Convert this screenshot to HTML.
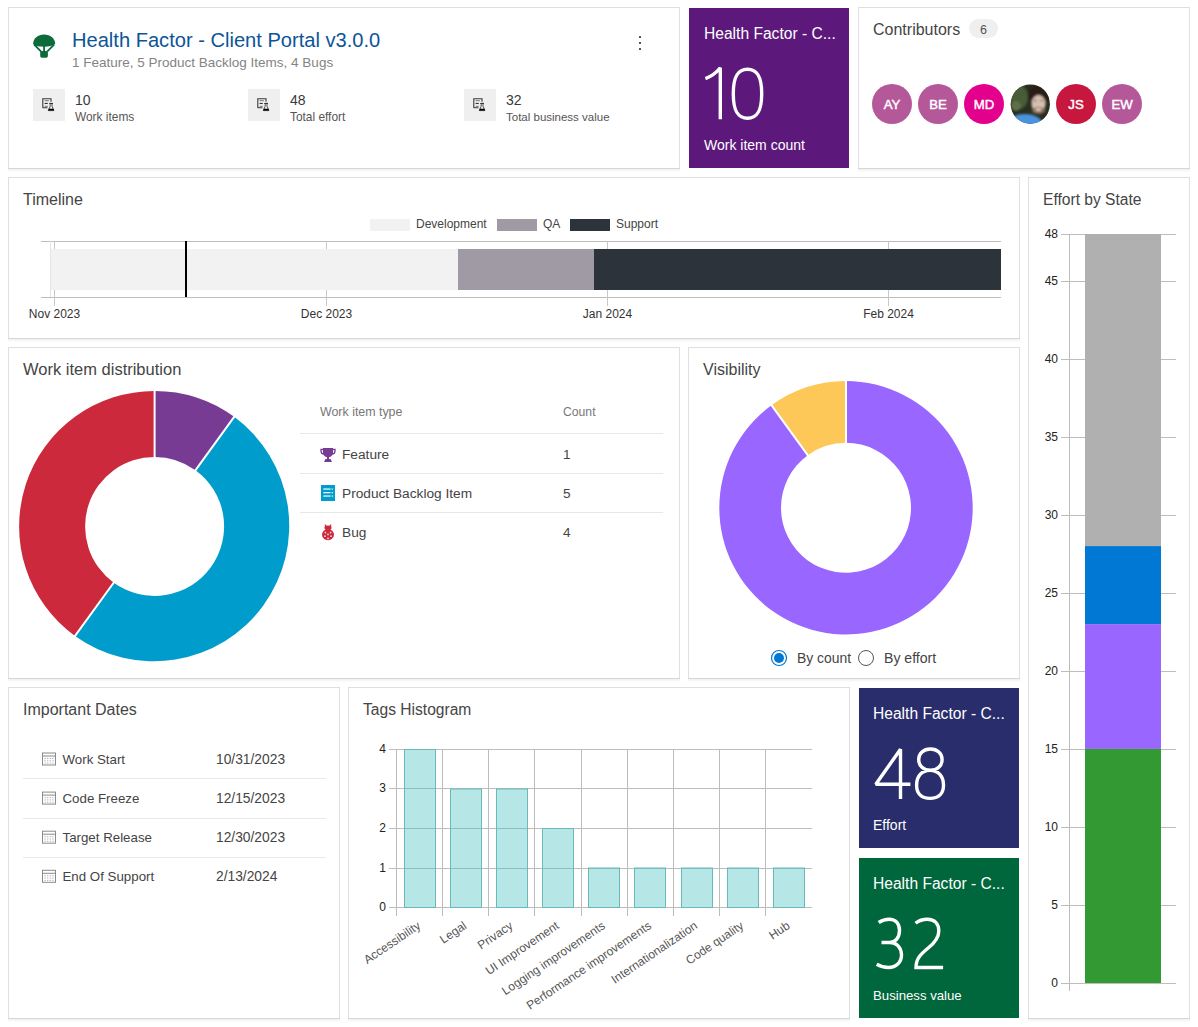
<!DOCTYPE html>
<html><head><meta charset="utf-8"><title>Dashboard</title>
<style>
html,body{margin:0;padding:0;background:#fff;}
body{width:1198px;height:1027px;overflow:hidden;position:relative;font-family:"Liberation Sans",sans-serif;}
svg{position:absolute;left:0;top:0;display:block;}
text{font-family:"Liberation Sans",sans-serif;}
</style></head>
<body>
<svg width="1198" height="1027" viewBox="0 0 1198 1027">
<rect x="8" y="169" width="672" height="1" fill="#f2f2f2" />
<rect x="8" y="170" width="672" height="1" fill="#f7f7f7" />
<rect x="8" y="171" width="672" height="1" fill="#fbfbfb" />
<rect x="8" y="7" width="672" height="162" fill="#dfdfdf" />
<rect x="8" y="168" width="672" height="1" fill="#d6d6d6" />
<rect x="9" y="8" width="670" height="160" fill="#fff" />
<rect x="858" y="169" width="332" height="1" fill="#f2f2f2" />
<rect x="858" y="170" width="332" height="1" fill="#f7f7f7" />
<rect x="858" y="171" width="332" height="1" fill="#fbfbfb" />
<rect x="858" y="7" width="332" height="162" fill="#dfdfdf" />
<rect x="858" y="168" width="332" height="1" fill="#d6d6d6" />
<rect x="859" y="8" width="330" height="160" fill="#fff" />
<rect x="8" y="339" width="1012" height="1" fill="#f2f2f2" />
<rect x="8" y="340" width="1012" height="1" fill="#f7f7f7" />
<rect x="8" y="341" width="1012" height="1" fill="#fbfbfb" />
<rect x="8" y="177" width="1012" height="162" fill="#dfdfdf" />
<rect x="8" y="338" width="1012" height="1" fill="#d6d6d6" />
<rect x="9" y="178" width="1010" height="160" fill="#fff" />
<rect x="1028" y="1019" width="162" height="1" fill="#f2f2f2" />
<rect x="1028" y="1020" width="162" height="1" fill="#f7f7f7" />
<rect x="1028" y="1021" width="162" height="1" fill="#fbfbfb" />
<rect x="1028" y="177" width="162" height="842" fill="#dfdfdf" />
<rect x="1028" y="1018" width="162" height="1" fill="#d6d6d6" />
<rect x="1029" y="178" width="160" height="840" fill="#fff" />
<rect x="8" y="679" width="672" height="1" fill="#f2f2f2" />
<rect x="8" y="680" width="672" height="1" fill="#f7f7f7" />
<rect x="8" y="681" width="672" height="1" fill="#fbfbfb" />
<rect x="8" y="347" width="672" height="332" fill="#dfdfdf" />
<rect x="8" y="678" width="672" height="1" fill="#d6d6d6" />
<rect x="9" y="348" width="670" height="330" fill="#fff" />
<rect x="688" y="679" width="332" height="1" fill="#f2f2f2" />
<rect x="688" y="680" width="332" height="1" fill="#f7f7f7" />
<rect x="688" y="681" width="332" height="1" fill="#fbfbfb" />
<rect x="688" y="347" width="332" height="332" fill="#dfdfdf" />
<rect x="688" y="678" width="332" height="1" fill="#d6d6d6" />
<rect x="689" y="348" width="330" height="330" fill="#fff" />
<rect x="8" y="1019" width="332" height="1" fill="#f2f2f2" />
<rect x="8" y="1020" width="332" height="1" fill="#f7f7f7" />
<rect x="8" y="1021" width="332" height="1" fill="#fbfbfb" />
<rect x="8" y="687" width="332" height="332" fill="#dfdfdf" />
<rect x="8" y="1018" width="332" height="1" fill="#d6d6d6" />
<rect x="9" y="688" width="330" height="330" fill="#fff" />
<rect x="348" y="1019" width="502" height="1" fill="#f2f2f2" />
<rect x="348" y="1020" width="502" height="1" fill="#f7f7f7" />
<rect x="348" y="1021" width="502" height="1" fill="#fbfbfb" />
<rect x="348" y="687" width="502" height="332" fill="#dfdfdf" />
<rect x="348" y="1018" width="502" height="1" fill="#d6d6d6" />
<rect x="349" y="688" width="500" height="330" fill="#fff" />
<path d="M33.1,44.2 C33,38.2 38,34.4 44.1,34.4 C50.2,34.4 55.2,38.2 55.2,44 C53,46 49,46.7 44.1,46.7 C39.2,46.7 35.2,46 33.1,44.2 Z" fill="#0d6b3b"/>
<path d="M34.2,44.6 L41.2,51.6 M54.1,44.6 L47.1,51.6 M44.1,46 V51.6" stroke="#0d6b3b" stroke-width="1.8" fill="none"/>
<rect x="40.2" y="51" width="7.7" height="6.7" rx="1.6" fill="#0d6b3b"/>
<text x="72" y="47" font-size="20.1" fill="#0c5597" text-anchor="start" font-weight="normal" >Health Factor - Client Portal v3.0.0</text>
<text x="72" y="66.5" font-size="13.5" fill="#848484" text-anchor="start" font-weight="normal" >1 Feature, 5 Product Backlog Items, 4 Bugs</text>
<rect x="639" y="36" width="2" height="2" fill="#555" />
<rect x="639" y="42" width="2" height="2" fill="#555" />
<rect x="639" y="48" width="2" height="2" fill="#555" />
<rect x="33" y="89" width="32" height="32" fill="#efefef" />
<g transform="translate(0 0)"><path d="M42.8,108 V98.8 H51 V101.8 M42.8,107.8 H47.5" stroke="#3a3a3a" stroke-width="1.1" fill="none"/><rect x="44.6" y="100.2" width="4.2" height="1" fill="#777"/><rect x="44.6" y="102.9" width="3.2" height="1.1" fill="#333"/><rect x="44.6" y="105.8" width="3.2" height="1" fill="#777"/><rect x="49.2" y="102.9" width="3.8" height="1.1" fill="#333"/><path d="M50.2,104 V106.2 L48.3,110.6 H53.9 L52,106.2 V104" stroke="#444" stroke-width="0.9" fill="none"/><path d="M48.6,108.8 H53.6 L54,110.6 H48.2 Z" fill="#000"/></g>
<text x="75" y="104.5" font-size="14" fill="#3a3a3a" text-anchor="start" font-weight="normal" >10</text>
<text x="75" y="121" font-size="11.9" fill="#555" text-anchor="start" font-weight="normal" >Work items</text>
<rect x="248" y="89" width="32" height="32" fill="#efefef" />
<g transform="translate(215 0)"><path d="M42.8,108 V98.8 H51 V101.8 M42.8,107.8 H47.5" stroke="#3a3a3a" stroke-width="1.1" fill="none"/><rect x="44.6" y="100.2" width="4.2" height="1" fill="#777"/><rect x="44.6" y="102.9" width="3.2" height="1.1" fill="#333"/><rect x="44.6" y="105.8" width="3.2" height="1" fill="#777"/><rect x="49.2" y="102.9" width="3.8" height="1.1" fill="#333"/><path d="M50.2,104 V106.2 L48.3,110.6 H53.9 L52,106.2 V104" stroke="#444" stroke-width="0.9" fill="none"/><path d="M48.6,108.8 H53.6 L54,110.6 H48.2 Z" fill="#000"/></g>
<text x="290" y="104.5" font-size="14" fill="#3a3a3a" text-anchor="start" font-weight="normal" >48</text>
<text x="290" y="121" font-size="11.9" fill="#555" text-anchor="start" font-weight="normal" >Total effort</text>
<rect x="464" y="89" width="32" height="32" fill="#efefef" />
<g transform="translate(431 0)"><path d="M42.8,108 V98.8 H51 V101.8 M42.8,107.8 H47.5" stroke="#3a3a3a" stroke-width="1.1" fill="none"/><rect x="44.6" y="100.2" width="4.2" height="1" fill="#777"/><rect x="44.6" y="102.9" width="3.2" height="1.1" fill="#333"/><rect x="44.6" y="105.8" width="3.2" height="1" fill="#777"/><rect x="49.2" y="102.9" width="3.8" height="1.1" fill="#333"/><path d="M50.2,104 V106.2 L48.3,110.6 H53.9 L52,106.2 V104" stroke="#444" stroke-width="0.9" fill="none"/><path d="M48.6,108.8 H53.6 L54,110.6 H48.2 Z" fill="#000"/></g>
<text x="506" y="104.5" font-size="14" fill="#3a3a3a" text-anchor="start" font-weight="normal" >32</text>
<text x="506" y="121" font-size="11.5" fill="#555" text-anchor="start" font-weight="normal" >Total business value</text>
<rect x="689" y="8" width="160" height="160" fill="#5c197b" />
<text x="704" y="38.8" font-size="15.6" fill="#fff" text-anchor="start" font-weight="normal" >Health Factor - C...</text>
<path d="M705.4,78.6 C711.5,76.5 716.5,72.5 720.3,67.8 L720.3,119.3 M747.5,69.3 C738,69.3 733.3,76 733.3,93.7 C733.3,111.5 738,118.2 747.5,118.2 C757,118.2 761.7,111.5 761.7,93.7 C761.7,76 757,69.3 747.5,69.3 Z" fill="none" stroke="#fff" stroke-width="3.4" stroke-linejoin="miter" stroke-miterlimit="2"/>
<text x="704" y="149.5" font-size="14.0" fill="#fff" text-anchor="start" font-weight="normal" >Work item count</text>
<rect x="859" y="688" width="160" height="160" fill="#292d6c" />
<text x="873" y="718.8" font-size="15.6" fill="#fff" text-anchor="start" font-weight="normal" >Health Factor - C...</text>
<path d="M910.4,784.2 L875.8,784.2 L900.5,749.3 L900.5,799 M930.4,749 C923.5,749 918.7,753.3 918.7,759.6 C918.7,765.9 923.5,770.3 930.4,770.3 C937.3,770.3 942.1,765.9 942.1,759.6 C942.1,753.3 937.3,749 930.4,749 Z M930,770.3 C921.7,770.3 916.6,776.3 916.6,785.3 C916.6,793.8 921.7,798.4 930,798.4 C938.3,798.4 943.5,793.8 943.5,785.3 C943.5,776.3 938.3,770.3 930,770.3 Z" fill="none" stroke="#fff" stroke-width="3.4" stroke-linejoin="miter" stroke-miterlimit="2"/>
<text x="873" y="829.5" font-size="14.0" fill="#fff" text-anchor="start" font-weight="normal" >Effort</text>
<rect x="859" y="858" width="160" height="160" fill="#00663b" />
<text x="873" y="888.8" font-size="15.6" fill="#fff" text-anchor="start" font-weight="normal" >Health Factor - C...</text>
<path d="M878.7,922.5 C882,920.2 885.5,919.2 889.2,919.2 C895.5,919.2 899.5,923.5 899.5,930.5 C899.5,937.5 895.5,942.5 889.5,942.5 L881.5,942.5 M889.5,942.5 C897,942.5 901.5,948 901.5,955 C901.5,962.5 896,967.5 888.5,967.5 C884,967.5 880,966.3 876.7,964.3 M915.6,923.2 C918.8,920.5 922.5,919.2 927.5,919.2 C934.5,919.2 938.8,923.8 938.8,931 C938.8,937.5 935.5,942 928.5,947.8 C921,954 916,958.5 916,967.5 L943.1,967.5" fill="none" stroke="#fff" stroke-width="3.4" stroke-linejoin="miter" stroke-miterlimit="2"/>
<text x="873" y="999.5" font-size="13.2" fill="#fff" text-anchor="start" font-weight="normal" >Business value</text>
<text x="873" y="35" font-size="16" fill="#454545" text-anchor="start" font-weight="normal" >Contributors</text>
<rect x="969" y="19" width="29" height="19" rx="9.5" fill="#efefef"/>
<text x="983.5" y="33.5" font-size="12.5" fill="#555" text-anchor="middle" font-weight="normal" >6</text>
<defs><radialGradient id="face" cx="0.55" cy="0.42" r="0.3"><stop offset="0" stop-color="#d9a98a"/><stop offset="0.7" stop-color="#b07a5a"/><stop offset="1" stop-color="#4a3a2a" stop-opacity="0"/></radialGradient><filter id="avblur" x="-20%" y="-20%" width="140%" height="140%"><feGaussianBlur stdDeviation="1.0"/></filter><clipPath id="avclip"><circle cx="1030.3" cy="104.2" r="19.6"/></clipPath></defs>
<circle cx="892" cy="104" r="20" fill="#b4589a"/>
<text x="892" y="109" font-size="13.2" fill="#fff" text-anchor="middle" font-weight="normal" stroke="#fff" stroke-width="0.45">AY</text>
<circle cx="938" cy="104" r="20" fill="#b4589a"/>
<text x="938" y="109" font-size="13.2" fill="#fff" text-anchor="middle" font-weight="normal" stroke="#fff" stroke-width="0.45">BE</text>
<circle cx="984" cy="104" r="20" fill="#e3008c"/>
<text x="984" y="109" font-size="13.2" fill="#fff" text-anchor="middle" font-weight="normal" stroke="#fff" stroke-width="0.45">MD</text>
<g clip-path="url(#avclip)"><rect x="1010" y="84" width="40" height="40" fill="#27301f"/><g filter="url(#avblur)"><ellipse cx="1019" cy="97" rx="9" ry="12" fill="#4a5c38"/><ellipse cx="1016" cy="106" rx="5" ry="5" fill="#5f7048"/><ellipse cx="1039" cy="95" rx="11" ry="10" fill="#2a1e16"/><ellipse cx="1038.5" cy="104" rx="7" ry="9" fill="#d6bfb0"/><ellipse cx="1038.5" cy="110.5" rx="6.5" ry="3.5" fill="#8a6c5a"/><ellipse cx="1038.5" cy="109.5" rx="3" ry="1.6" fill="#e0cabb"/><rect x="1034" y="100" width="2.4" height="1.2" fill="#5a4030"/><rect x="1040.5" y="100" width="2.4" height="1.2" fill="#5a4030"/><ellipse cx="1045" cy="118" rx="6" ry="6" fill="#2a2a22"/><ellipse cx="1025" cy="122.5" rx="16" ry="8.5" fill="#4a94e0"/></g></g>
<circle cx="1076" cy="104" r="20" fill="#c8173f"/>
<text x="1076" y="109" font-size="13.2" fill="#fff" text-anchor="middle" font-weight="normal" stroke="#fff" stroke-width="0.45">JS</text>
<circle cx="1122" cy="104" r="20" fill="#b4589a"/>
<text x="1122" y="109" font-size="13.2" fill="#fff" text-anchor="middle" font-weight="normal" stroke="#fff" stroke-width="0.45">EW</text>
<text x="23" y="205" font-size="16" fill="#454545" text-anchor="start" font-weight="normal" >Timeline</text>
<rect x="370" y="219" width="40" height="12" fill="#f2f2f2" />
<text x="416" y="228" font-size="12" fill="#444" text-anchor="start" font-weight="normal" >Development</text>
<rect x="497" y="219" width="40" height="12" fill="#a09aa4" />
<text x="543" y="228" font-size="12" fill="#444" text-anchor="start" font-weight="normal" >QA</text>
<rect x="570" y="219" width="40" height="12" fill="#2d333b" />
<text x="616" y="228" font-size="12" fill="#444" text-anchor="start" font-weight="normal" >Support</text>
<rect x="50" y="249" width="408" height="41" fill="#f2f2f2" />
<rect x="458" y="249" width="136" height="41" fill="#a09aa4" />
<rect x="594" y="249" width="407" height="41" fill="#2d333b" />
<rect x="41" y="241" width="960" height="1" fill="#bdbdbd"/>
<rect x="41" y="297" width="960" height="1" fill="#bdbdbd"/>
<rect x="50" y="241" width="1" height="56" fill="#e4e4e4"/>
<rect x="54" y="241" width="1" height="8" fill="#c8c8c8"/>
<rect x="54" y="290" width="1" height="16" fill="#c8c8c8"/>
<text x="54.5" y="318" font-size="12" fill="#333" text-anchor="middle" font-weight="normal" >Nov 2023</text>
<rect x="326" y="241" width="1" height="8" fill="#c8c8c8"/>
<rect x="326" y="290" width="1" height="16" fill="#c8c8c8"/>
<text x="326.5" y="318" font-size="12" fill="#333" text-anchor="middle" font-weight="normal" >Dec 2023</text>
<rect x="607" y="241" width="1" height="8" fill="#c8c8c8"/>
<rect x="607" y="290" width="1" height="16" fill="#c8c8c8"/>
<text x="607.5" y="318" font-size="12" fill="#333" text-anchor="middle" font-weight="normal" >Jan 2024</text>
<rect x="888" y="241" width="1" height="8" fill="#c8c8c8"/>
<rect x="888" y="290" width="1" height="16" fill="#c8c8c8"/>
<text x="888.5" y="318" font-size="12" fill="#333" text-anchor="middle" font-weight="normal" >Feb 2024</text>
<rect x="185" y="241" width="2" height="56" fill="#000" />
<text x="1043" y="205" font-size="15.6" fill="#454545" text-anchor="start" font-weight="normal" >Effort by State</text>
<rect x="1061" y="983" width="115" height="1" fill="#bdbdbd"/>
<text x="1058" y="987" font-size="12" fill="#222" text-anchor="end" font-weight="normal" >0</text>
<rect x="1061" y="905" width="115" height="1" fill="#bdbdbd"/>
<text x="1058" y="909" font-size="12" fill="#222" text-anchor="end" font-weight="normal" >5</text>
<rect x="1061" y="827" width="115" height="1" fill="#bdbdbd"/>
<text x="1058" y="831" font-size="12" fill="#222" text-anchor="end" font-weight="normal" >10</text>
<rect x="1061" y="749" width="115" height="1" fill="#bdbdbd"/>
<text x="1058" y="753" font-size="12" fill="#222" text-anchor="end" font-weight="normal" >15</text>
<rect x="1061" y="671" width="115" height="1" fill="#bdbdbd"/>
<text x="1058" y="675" font-size="12" fill="#222" text-anchor="end" font-weight="normal" >20</text>
<rect x="1061" y="593" width="115" height="1" fill="#bdbdbd"/>
<text x="1058" y="597" font-size="12" fill="#222" text-anchor="end" font-weight="normal" >25</text>
<rect x="1061" y="515" width="115" height="1" fill="#bdbdbd"/>
<text x="1058" y="519" font-size="12" fill="#222" text-anchor="end" font-weight="normal" >30</text>
<rect x="1061" y="437" width="115" height="1" fill="#bdbdbd"/>
<text x="1058" y="441" font-size="12" fill="#222" text-anchor="end" font-weight="normal" >35</text>
<rect x="1061" y="359" width="115" height="1" fill="#bdbdbd"/>
<text x="1058" y="363" font-size="12" fill="#222" text-anchor="end" font-weight="normal" >40</text>
<rect x="1061" y="281" width="115" height="1" fill="#bdbdbd"/>
<text x="1058" y="285" font-size="12" fill="#222" text-anchor="end" font-weight="normal" >45</text>
<rect x="1061" y="234" width="115" height="1" fill="#bdbdbd"/>
<text x="1058" y="238" font-size="12" fill="#222" text-anchor="end" font-weight="normal" >48</text>
<rect x="1069" y="234" width="1" height="757" fill="#bdbdbd"/>
<rect x="1085" y="234.0" width="76" height="312.08333333333337" fill="#b0b0b0" />
<rect x="1085" y="546.0833333333334" width="76" height="78.02083333333337" fill="#0078d4" />
<rect x="1085" y="624.1041666666667" width="76" height="124.83333333333326" fill="#9966ff" />
<rect x="1085" y="748.9375" width="76" height="234.0625" fill="#339933" />
<text x="23" y="375" font-size="16.5" fill="#454545" text-anchor="start" font-weight="normal" >Work item distribution</text>
<path d="M154.60,390.90 A135.5,135.5 0 0 1 234.24,416.78 L195.45,470.17 A69.5,69.5 0 0 0 154.60,456.90 Z" fill="#773b93"/>
<path d="M234.24,416.78 A135.5,135.5 0 0 1 74.96,636.02 L113.75,582.63 A69.5,69.5 0 0 0 195.45,470.17 Z" fill="#009ccc"/>
<path d="M74.96,636.02 A135.5,135.5 0 0 1 154.60,390.90 L154.60,456.90 A69.5,69.5 0 0 0 113.75,582.63 Z" fill="#cc293d"/>
<line x1="154.60" y1="458.90" x2="154.60" y2="388.90" stroke="#fff" stroke-width="2"/>
<line x1="194.28" y1="471.79" x2="235.42" y2="415.16" stroke="#fff" stroke-width="2"/>
<line x1="114.92" y1="581.01" x2="73.78" y2="637.64" stroke="#fff" stroke-width="2"/>
<text x="320" y="416" font-size="12.4" fill="#777" text-anchor="start" font-weight="normal" >Work item type</text>
<text x="563" y="416" font-size="12.2" fill="#777" text-anchor="start" font-weight="normal" >Count</text>
<rect x="300" y="433" width="363" height="1" fill="#e8e8e8"/>
<rect x="300" y="473" width="363" height="1" fill="#e8e8e8"/>
<rect x="300" y="512" width="363" height="1" fill="#e8e8e8"/>
<text x="342" y="459" font-size="13.7" fill="#444" text-anchor="start" font-weight="normal" >Feature</text>
<text x="563" y="459" font-size="13.6" fill="#444" text-anchor="start" font-weight="normal" >1</text>
<text x="342" y="498" font-size="13.7" fill="#444" text-anchor="start" font-weight="normal" >Product Backlog Item</text>
<text x="563" y="498" font-size="13.6" fill="#444" text-anchor="start" font-weight="normal" >5</text>
<text x="342" y="537" font-size="13.7" fill="#444" text-anchor="start" font-weight="normal" >Bug</text>
<text x="563" y="537" font-size="13.6" fill="#444" text-anchor="start" font-weight="normal" >4</text>
<path d="M323,448 h10 v4.5 a5,5 0 0 1 -10,0 z" fill="#773b93"/>
<path d="M323,449.5 h-2 v1.5 a3,3 0 0 0 3,3 M333,449.5 h2 v1.5 a3,3 0 0 1 -3,3" stroke="#773b93" stroke-width="1.3" fill="none"/>
<rect x="327" y="456" width="2" height="3" fill="#773b93"/><path d="M324,462 l1.5,-3 h5 l1.5,3 z" fill="#773b93"/>
<rect x="321" y="485" width="14" height="16" fill="#009ccc"/>
<rect x="323.3" y="488.4" width="7.2" height="1.3" fill="#e6f6fb"/>
<rect x="331.5" y="488.4" width="1.6" height="1.3" fill="#bfe8f5"/>
<rect x="323.3" y="492" width="7.2" height="1.3" fill="#e6f6fb"/>
<rect x="331.5" y="492" width="1.6" height="1.3" fill="#bfe8f5"/>
<rect x="323.3" y="495.4" width="7.2" height="1.3" fill="#e6f6fb"/>
<rect x="331.5" y="495.4" width="1.6" height="1.3" fill="#bfe8f5"/>
<path d="M324.8,524.6 l1.6,1.8 M331.2,524.6 l-1.6,1.8" stroke="#cc293d" stroke-width="1.1"/>
<ellipse cx="328" cy="527.8" rx="3.6" ry="2.4" fill="#cc293d"/>
<ellipse cx="328" cy="534.6" rx="6" ry="5.6" fill="#cc293d"/>
<circle cx="325.4" cy="532.6" r="0.9" fill="#f7d5da"/>
<circle cx="330.6" cy="532.6" r="0.9" fill="#f7d5da"/>
<circle cx="325" cy="536.2" r="0.9" fill="#f7d5da"/>
<circle cx="331" cy="536.2" r="0.9" fill="#f7d5da"/>
<circle cx="328" cy="538.4" r="0.9" fill="#f7d5da"/>
<circle cx="328" cy="534.4" r="0.9" fill="#f7d5da"/>
<text x="703" y="375" font-size="16" fill="#454545" text-anchor="start" font-weight="normal" >Visibility</text>
<path d="M846.00,381.10 A126.7,126.7 0 1 1 771.53,405.30 L807.79,455.21 A65,65 0 1 0 846.00,442.80 Z" fill="#9966ff"/>
<path d="M771.53,405.30 A126.7,126.7 0 0 1 846.00,381.10 L846.00,442.80 A65,65 0 0 0 807.79,455.21 Z" fill="#fdc857"/>
<line x1="846.00" y1="444.80" x2="846.00" y2="379.10" stroke="#fff" stroke-width="2"/>
<line x1="808.97" y1="456.83" x2="770.35" y2="403.68" stroke="#fff" stroke-width="2"/>
<circle cx="779" cy="658" r="7.5" fill="none" stroke="#0078d4" stroke-width="1.2"/><circle cx="779" cy="658" r="5" fill="#0078d4"/>
<text x="797" y="663" font-size="13.9" fill="#444" text-anchor="start" font-weight="normal" >By count</text>
<circle cx="866" cy="658" r="7.5" fill="none" stroke="#555" stroke-width="1"/>
<text x="884" y="663" font-size="14.1" fill="#444" text-anchor="start" font-weight="normal" >By effort</text>
<text x="23" y="715" font-size="16" fill="#454545" text-anchor="start" font-weight="normal" >Important Dates</text>
<rect x="42.5" y="753.0" width="13" height="12" fill="none" stroke="#8a8a8a" stroke-width="1"/>
<rect x="42.5" y="755.5" width="13" height="1" fill="#8a8a8a"/>
<rect x="44.5" y="758.0" width="1.2" height="1" fill="#aaa"/>
<rect x="44.5" y="760.3" width="1.2" height="1" fill="#aaa"/>
<rect x="44.5" y="762.6" width="1.2" height="1" fill="#aaa"/>
<rect x="47.1" y="758.0" width="1.2" height="1" fill="#aaa"/>
<rect x="47.1" y="760.3" width="1.2" height="1" fill="#aaa"/>
<rect x="47.1" y="762.6" width="1.2" height="1" fill="#aaa"/>
<rect x="49.7" y="758.0" width="1.2" height="1" fill="#aaa"/>
<rect x="49.7" y="760.3" width="1.2" height="1" fill="#aaa"/>
<rect x="49.7" y="762.6" width="1.2" height="1" fill="#aaa"/>
<rect x="52.3" y="758.0" width="1.2" height="1" fill="#aaa"/>
<rect x="52.3" y="760.3" width="1.2" height="1" fill="#aaa"/>
<rect x="52.3" y="762.6" width="1.2" height="1" fill="#aaa"/>
<text x="62.5" y="764.0" font-size="13.3" fill="#444" text-anchor="start" font-weight="normal" >Work Start</text>
<text x="216" y="764.0" font-size="13.8" fill="#444" text-anchor="start" font-weight="normal" >10/31/2023</text>
<rect x="23" y="778" width="303" height="1" fill="#e8e8e8"/>
<rect x="42.5" y="792.1" width="13" height="12" fill="none" stroke="#8a8a8a" stroke-width="1"/>
<rect x="42.5" y="794.6" width="13" height="1" fill="#8a8a8a"/>
<rect x="44.5" y="797.1" width="1.2" height="1" fill="#aaa"/>
<rect x="44.5" y="799.4" width="1.2" height="1" fill="#aaa"/>
<rect x="44.5" y="801.7" width="1.2" height="1" fill="#aaa"/>
<rect x="47.1" y="797.1" width="1.2" height="1" fill="#aaa"/>
<rect x="47.1" y="799.4" width="1.2" height="1" fill="#aaa"/>
<rect x="47.1" y="801.7" width="1.2" height="1" fill="#aaa"/>
<rect x="49.7" y="797.1" width="1.2" height="1" fill="#aaa"/>
<rect x="49.7" y="799.4" width="1.2" height="1" fill="#aaa"/>
<rect x="49.7" y="801.7" width="1.2" height="1" fill="#aaa"/>
<rect x="52.3" y="797.1" width="1.2" height="1" fill="#aaa"/>
<rect x="52.3" y="799.4" width="1.2" height="1" fill="#aaa"/>
<rect x="52.3" y="801.7" width="1.2" height="1" fill="#aaa"/>
<text x="62.5" y="803.1" font-size="13.3" fill="#444" text-anchor="start" font-weight="normal" >Code Freeze</text>
<text x="216" y="803.1" font-size="13.8" fill="#444" text-anchor="start" font-weight="normal" >12/15/2023</text>
<rect x="23" y="818" width="303" height="1" fill="#e8e8e8"/>
<rect x="42.5" y="831.2" width="13" height="12" fill="none" stroke="#8a8a8a" stroke-width="1"/>
<rect x="42.5" y="833.7" width="13" height="1" fill="#8a8a8a"/>
<rect x="44.5" y="836.2" width="1.2" height="1" fill="#aaa"/>
<rect x="44.5" y="838.5" width="1.2" height="1" fill="#aaa"/>
<rect x="44.5" y="840.8" width="1.2" height="1" fill="#aaa"/>
<rect x="47.1" y="836.2" width="1.2" height="1" fill="#aaa"/>
<rect x="47.1" y="838.5" width="1.2" height="1" fill="#aaa"/>
<rect x="47.1" y="840.8" width="1.2" height="1" fill="#aaa"/>
<rect x="49.7" y="836.2" width="1.2" height="1" fill="#aaa"/>
<rect x="49.7" y="838.5" width="1.2" height="1" fill="#aaa"/>
<rect x="49.7" y="840.8" width="1.2" height="1" fill="#aaa"/>
<rect x="52.3" y="836.2" width="1.2" height="1" fill="#aaa"/>
<rect x="52.3" y="838.5" width="1.2" height="1" fill="#aaa"/>
<rect x="52.3" y="840.8" width="1.2" height="1" fill="#aaa"/>
<text x="62.5" y="842.2" font-size="13.3" fill="#444" text-anchor="start" font-weight="normal" >Target Release</text>
<text x="216" y="842.2" font-size="13.8" fill="#444" text-anchor="start" font-weight="normal" >12/30/2023</text>
<rect x="23" y="857" width="303" height="1" fill="#e8e8e8"/>
<rect x="42.5" y="870.3" width="13" height="12" fill="none" stroke="#8a8a8a" stroke-width="1"/>
<rect x="42.5" y="872.8" width="13" height="1" fill="#8a8a8a"/>
<rect x="44.5" y="875.3" width="1.2" height="1" fill="#aaa"/>
<rect x="44.5" y="877.6" width="1.2" height="1" fill="#aaa"/>
<rect x="44.5" y="879.9" width="1.2" height="1" fill="#aaa"/>
<rect x="47.1" y="875.3" width="1.2" height="1" fill="#aaa"/>
<rect x="47.1" y="877.6" width="1.2" height="1" fill="#aaa"/>
<rect x="47.1" y="879.9" width="1.2" height="1" fill="#aaa"/>
<rect x="49.7" y="875.3" width="1.2" height="1" fill="#aaa"/>
<rect x="49.7" y="877.6" width="1.2" height="1" fill="#aaa"/>
<rect x="49.7" y="879.9" width="1.2" height="1" fill="#aaa"/>
<rect x="52.3" y="875.3" width="1.2" height="1" fill="#aaa"/>
<rect x="52.3" y="877.6" width="1.2" height="1" fill="#aaa"/>
<rect x="52.3" y="879.9" width="1.2" height="1" fill="#aaa"/>
<text x="62.5" y="881.3" font-size="13.3" fill="#444" text-anchor="start" font-weight="normal" >End Of Support</text>
<text x="216" y="881.3" font-size="13.8" fill="#444" text-anchor="start" font-weight="normal" >2/13/2024</text>
<text x="363" y="715" font-size="15.6" fill="#454545" text-anchor="start" font-weight="normal" >Tags Histogram</text>
<rect x="396" y="749" width="1" height="167" fill="#bdbdbd"/>
<rect x="442" y="749" width="1" height="167" fill="#bdbdbd"/>
<rect x="488" y="749" width="1" height="167" fill="#bdbdbd"/>
<rect x="534" y="749" width="1" height="167" fill="#bdbdbd"/>
<rect x="581" y="749" width="1" height="167" fill="#bdbdbd"/>
<rect x="627" y="749" width="1" height="167" fill="#bdbdbd"/>
<rect x="673" y="749" width="1" height="167" fill="#bdbdbd"/>
<rect x="719" y="749" width="1" height="167" fill="#bdbdbd"/>
<rect x="765" y="749" width="1" height="167" fill="#bdbdbd"/>
<rect x="389" y="907" width="423" height="1" fill="#bdbdbd"/>
<text x="386" y="911" font-size="12" fill="#222" text-anchor="end" font-weight="normal" >0</text>
<rect x="389" y="868" width="423" height="1" fill="#bdbdbd"/>
<text x="386" y="872" font-size="12" fill="#222" text-anchor="end" font-weight="normal" >1</text>
<rect x="389" y="828" width="423" height="1" fill="#bdbdbd"/>
<text x="386" y="832" font-size="12" fill="#222" text-anchor="end" font-weight="normal" >2</text>
<rect x="389" y="788" width="423" height="1" fill="#bdbdbd"/>
<text x="386" y="792" font-size="12" fill="#222" text-anchor="end" font-weight="normal" >3</text>
<rect x="389" y="749" width="423" height="1" fill="#bdbdbd"/>
<text x="386" y="753" font-size="12" fill="#222" text-anchor="end" font-weight="normal" >4</text>
<rect x="404.5" y="749.5" width="31" height="158.0" fill="rgba(75,192,192,0.4)" stroke="#68baba" stroke-width="1"/>
<text x="419.6" y="925" font-size="12" fill="#555" text-anchor="end" dominant-baseline="middle" transform="rotate(-34 419.6 925)">Accessibility</text>
<rect x="450.5" y="789.0" width="31" height="118.5" fill="rgba(75,192,192,0.4)" stroke="#68baba" stroke-width="1"/>
<text x="465.8" y="925" font-size="12" fill="#555" text-anchor="end" dominant-baseline="middle" transform="rotate(-34 465.8 925)">Legal</text>
<rect x="496.5" y="789.0" width="31" height="118.5" fill="rgba(75,192,192,0.4)" stroke="#68baba" stroke-width="1"/>
<text x="511.9" y="925" font-size="12" fill="#555" text-anchor="end" dominant-baseline="middle" transform="rotate(-34 511.9 925)">Privacy</text>
<rect x="542.5" y="828.5" width="31" height="79.0" fill="rgba(75,192,192,0.4)" stroke="#68baba" stroke-width="1"/>
<text x="558.1" y="925" font-size="12" fill="#555" text-anchor="end" dominant-baseline="middle" transform="rotate(-34 558.1 925)">UI Improvement</text>
<rect x="588.5" y="868.0" width="31" height="39.5" fill="rgba(75,192,192,0.4)" stroke="#68baba" stroke-width="1"/>
<text x="604.2" y="925" font-size="12" fill="#555" text-anchor="end" dominant-baseline="middle" transform="rotate(-34 604.2 925)">Logging improvements</text>
<rect x="634.5" y="868.0" width="31" height="39.5" fill="rgba(75,192,192,0.4)" stroke="#68baba" stroke-width="1"/>
<text x="650.4" y="925" font-size="12" fill="#555" text-anchor="end" dominant-baseline="middle" transform="rotate(-34 650.4 925)">Performance improvements</text>
<rect x="681.5" y="868.0" width="31" height="39.5" fill="rgba(75,192,192,0.4)" stroke="#68baba" stroke-width="1"/>
<text x="696.6" y="925" font-size="12" fill="#555" text-anchor="end" dominant-baseline="middle" transform="rotate(-34 696.6 925)">Internationalization</text>
<rect x="727.5" y="868.0" width="31" height="39.5" fill="rgba(75,192,192,0.4)" stroke="#68baba" stroke-width="1"/>
<text x="742.8" y="925" font-size="12" fill="#555" text-anchor="end" dominant-baseline="middle" transform="rotate(-34 742.8 925)">Code quality</text>
<rect x="773.5" y="868.0" width="31" height="39.5" fill="rgba(75,192,192,0.4)" stroke="#68baba" stroke-width="1"/>
<text x="788.9" y="925" font-size="12" fill="#555" text-anchor="end" dominant-baseline="middle" transform="rotate(-34 788.9 925)">Hub</text>
</svg>
</body></html>
